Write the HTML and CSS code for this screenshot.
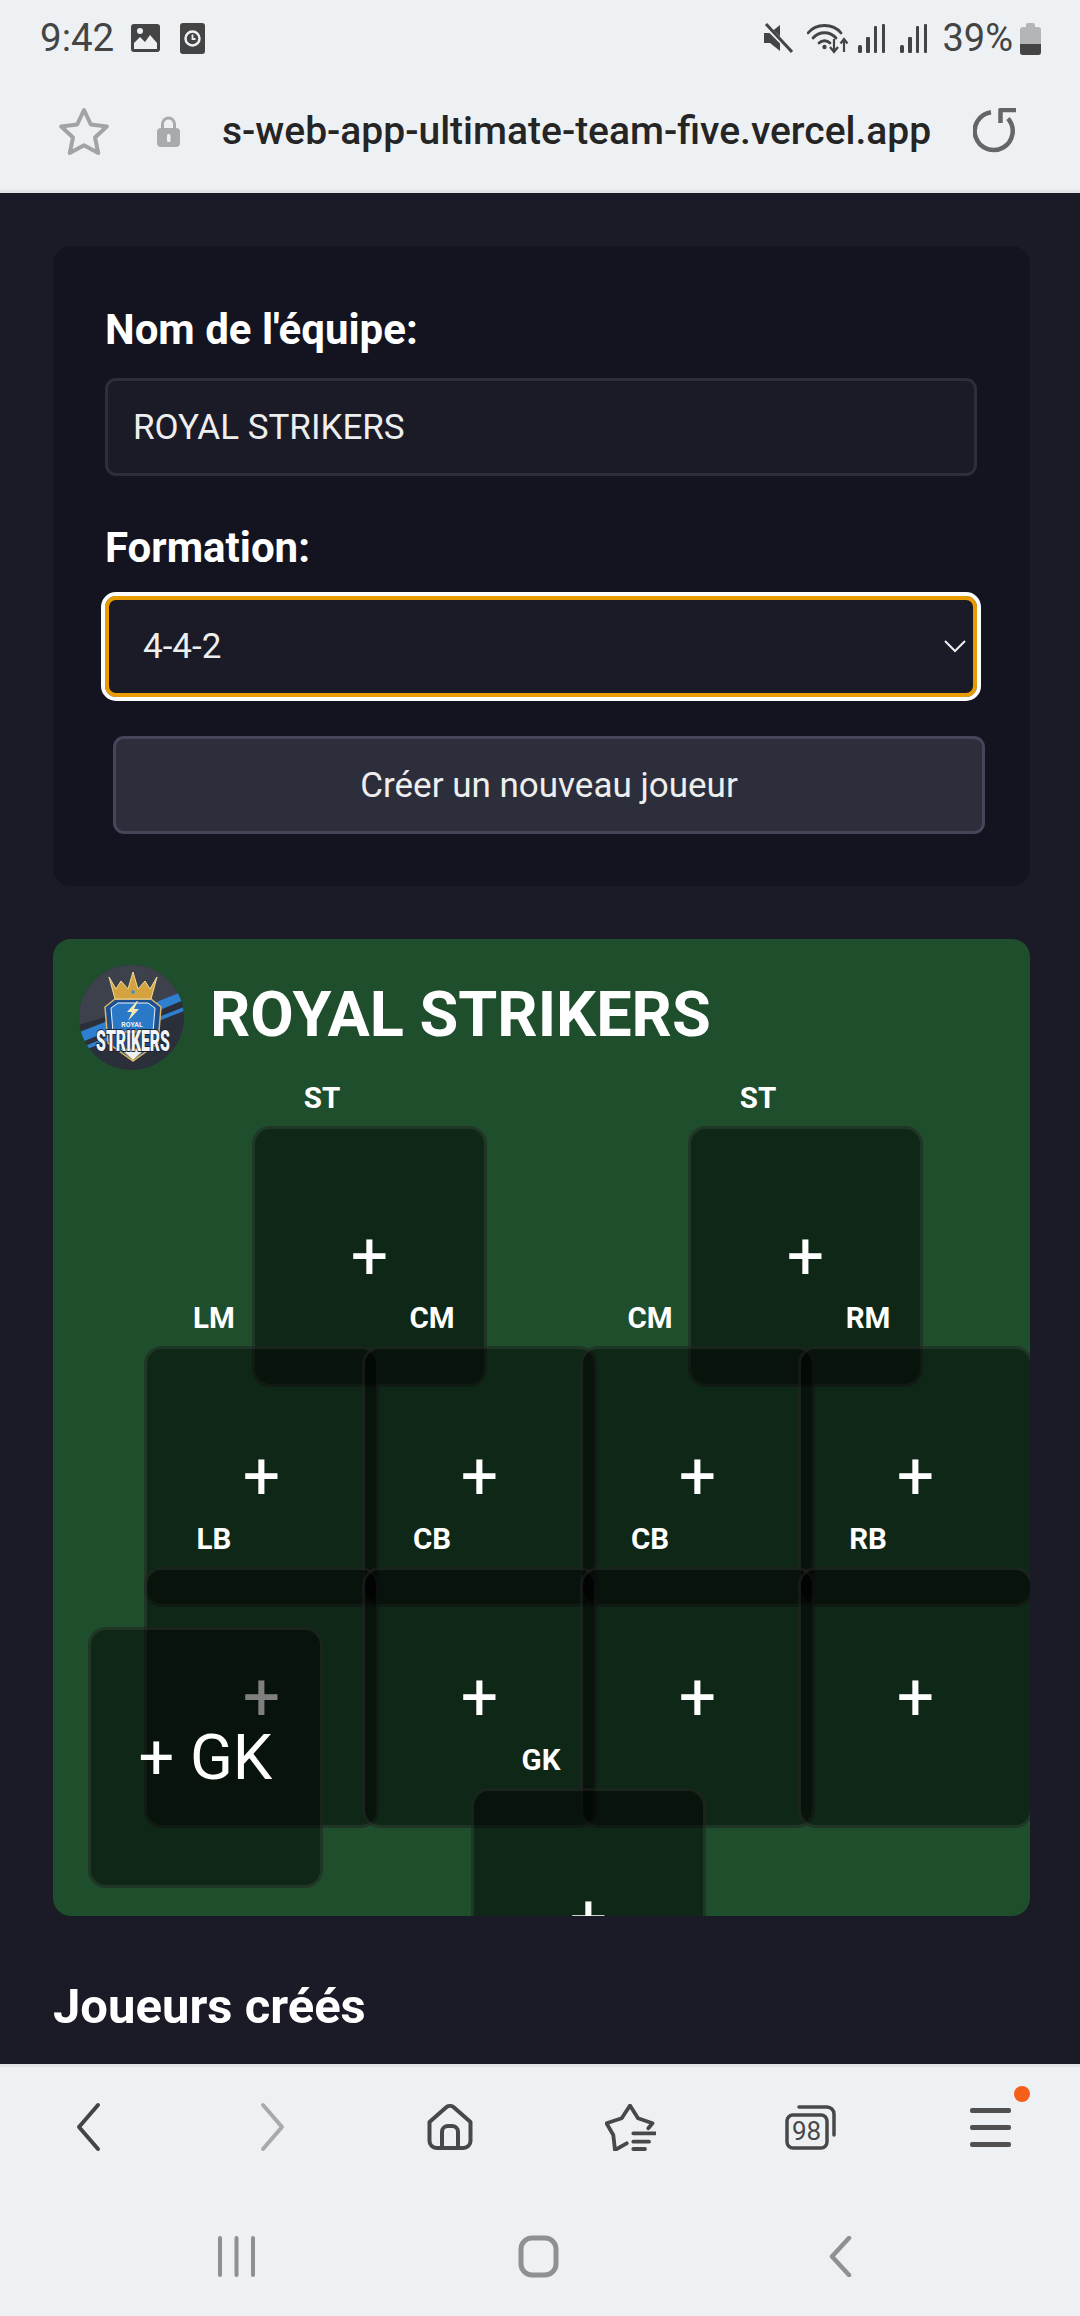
FILE: index.html
```html
<!DOCTYPE html>
<html lang="fr">
<head>
<meta charset="utf-8">
<title>Ultimate Team</title>
<link rel="stylesheet" href="styles.css">
</head>
<body>
<header class="chrome-top">
  <div class="status">
    <div class="status-group">
      <span class="time">9:42</span>
      <svg class="ic-img" viewBox="0 0 29 28"><rect width="29" height="28" rx="3" fill="#444"/><path d="M3 25V19l6-6 5 5 5-7 7 8v6z" fill="#eef1f4"/><circle cx="9" cy="7" r="3" fill="#eef1f4"/></svg>
      <svg class="ic-clock" viewBox="0 0 25 31"><rect width="25" height="31" rx="3" fill="#444"/><circle cx="12.500" cy="15.500" r="7" fill="none" stroke="#eef1f4" stroke-width="2.500"/><path d="M12.500 11.500v4.500h3" fill="none" stroke="#eef1f4" stroke-width="1.800"/></svg>
    </div>
    <div class="status-group right">
      <svg class="ic-mute" viewBox="0 0 29 30"><path d="M0 10h6l10-8v26l-10-8H0z" fill="#444"/><path d="M1 2l27 27" stroke="#eef1f4" stroke-width="5"/><path d="M2 1l26 28" stroke="#444" stroke-width="3"/></svg>
      <svg class="ic-wifi" viewBox="0 0 42 31"><g fill="none" stroke="#444" stroke-width="2.800" stroke-linecap="round"><path d="M1 10C9 0 26 0 34 10"/><path d="M6 15C12 8 23 8 29 15"/><path d="M12 20c3-3 8-3 11 0"/></g><circle cx="17.500" cy="24" r="2.200" fill="#444"/><path d="M27 16v13m-4-5 4 5 4-5M37 29V16m-3.500 4.500 3.500-4.500 3.500 4.500" fill="none" stroke="#444" stroke-width="2.200"/></svg>
      <svg class="ic-signal" viewBox="0 0 28 29"><g fill="#444"><rect x="0" y="21" width="4" height="8" rx="1.500"/><rect x="8" y="13" width="4" height="16" rx="1"/><rect x="16" y="2" width="3" height="27" rx="1"/><rect x="24" y="0" width="3" height="29" rx="1"/></g></svg>
      <svg class="ic-signal" viewBox="0 0 28 29"><g fill="#444"><rect x="0" y="21" width="4" height="8" rx="1.500"/><rect x="8" y="13" width="4" height="16" rx="1"/><rect x="16" y="2" width="3" height="27" rx="1"/><rect x="24" y="0" width="3" height="29" rx="1"/></g></svg>
      <span class="battery-text">39%</span>
      <svg class="ic-battery" viewBox="0 0 21 33"><path d="M6 3a2 2 0 0 1 2-2h5a2 2 0 0 1 2 2v2h3a3 3 0 0 1 3 3v22a3 3 0 0 1-3 3H3a3 3 0 0 1-3-3V8a3 3 0 0 1 3-3h3z" fill="#b4b5b6"/><path d="M0 22h21v8a3 3 0 0 1-3 3H3a3 3 0 0 1-3-3z" fill="#444"/></svg>
    </div>
  </div>
  <div class="urlbar">
    <svg class="ic-star" viewBox="0 0 52 48"><path d="M26 3l6.800 14.500 16 2-11.800 11 3.200 15.500L26 38.200 11.800 46 15 30.500 3.200 19.500l16-2z" fill="none" stroke="#a2a3a4" stroke-width="4" stroke-linejoin="round"/></svg>
    <svg class="ic-lock" viewBox="0 0 23 31"><path d="M5.500 14V8a6 6 0 0 1 12 0v6" fill="none" stroke="#a9aaab" stroke-width="3"/><rect y="12" width="23" height="19" rx="4" fill="#a9aaab"/><rect x="10" y="18" width="3.500" height="8" rx="1.500" fill="#eef1f4"/></svg>
    <span class="url">s-web-app-ultimate-team-five.vercel.app</span>
    <svg class="ic-reload" viewBox="0 0 46 46"><path d="M18 4.200A19 19 0 1 0 35 10.500" fill="none" stroke="#666" stroke-width="4.500"/><path d="M43 2H27.500V15" fill="none" stroke="#666" stroke-width="4.500" stroke-linejoin="round"/></svg>
  </div>
</header>

<main class="page">
  <section class="form-card">
    <label class="field-label" for="team">Nom de l'équipe:</label>
    <input class="text-input" id="team" type="text" value="ROYAL STRIKERS">
    <label class="field-label second" for="formation">Formation:</label>
    <div class="select-wrap">
      <select class="select" id="formation"><option>4-4-2</option></select>
      <svg class="chevron" viewBox="0 0 22 13"><path d="M1 1l10 10L21 1" fill="none" stroke="#eee" stroke-width="2"/></svg>
    </div>
    <button class="create-btn" type="button">Créer un nouveau joueur</button>
  </section>

  <section class="team-card">
    <div class="team-head">
      <svg class="logo" viewBox="0 0 105 105">
        <defs><clipPath id="disc"><circle cx="52.500" cy="52.500" r="52.500"/></clipPath></defs>
        <g clip-path="url(#disc)">
          <rect width="105" height="105" fill="#2b2f3a"/>
          <path d="M0 0h105v28L0 60z" fill="#3d414c"/>
          <path d="M-2 68 105 26v9L-2 79z" fill="#2f7fd0"/>
          <path d="M-2 84 105 42v4L-2 88z" fill="#2f7fd0"/>
          <path d="M26 42l10-8h36l10 8-3 36-25 18-25-18z" fill="#1d4f8f" stroke="#d9b469" stroke-width="1.500"/>
          <path d="M32 43l7-5h30l7 5-2 24H34z" fill="#2a79c8" stroke="#eef2f6" stroke-width="1"/>
          <path d="M30 12 37 24 42 16 49 24 54 7 59 24 66 16 71 24 78 12 72 34H36z" fill="#d4a23f" stroke="#f2dc9c" stroke-width="1"/>
          <circle cx="54" cy="27" r="1.800" fill="#2f8ed8"/>
          <path d="M58 36 48 47h5l-4 9 11-12h-5l4-8z" fill="#f6e7b4"/>
          <text class="logo-small" x="53" y="62" text-anchor="middle">ROYAL</text>
          <path d="M42 84h24L54 95z" fill="#eef1f5" stroke="#d9b469" stroke-width="1"/>
          <text class="logo-big" x="54" y="86" text-anchor="middle" textLength="74" lengthAdjust="spacingAndGlyphs">STRIKERS</text>
        </g>
      </svg>
      <h2 class="team-name">ROYAL STRIKERS</h2>
    </div>

    <div class="slot st1"><span class="pos">ST</span><span class="plus">+</span></div>
    <div class="slot st2"><span class="pos">ST</span><span class="plus">+</span></div>
    <div class="slot mid c1"><span class="pos">LM</span><span class="plus">+</span></div>
    <div class="slot mid c2"><span class="pos">CM</span><span class="plus">+</span></div>
    <div class="slot mid c3"><span class="pos">CM</span><span class="plus">+</span></div>
    <div class="slot mid c4"><span class="pos">RM</span><span class="plus">+</span></div>
    <div class="slot back c1"><span class="pos">LB</span><span class="plus">+</span></div>
    <div class="slot back c2"><span class="pos">CB</span><span class="plus">+</span></div>
    <div class="slot back c3"><span class="pos">CB</span><span class="plus">+</span></div>
    <div class="slot back c4"><span class="pos">RB</span><span class="plus">+</span></div>
    <div class="slot gk"><span class="pos">GK</span><span class="plus">+</span></div>
    <div class="slot bench"><span class="bench-text">+ GK</span></div>
  </section>

  <h2 class="players-title">Joueurs créés</h2>
</main>

<footer class="chrome-bottom">
  <nav class="browser-nav">
    <svg class="ic-chev prev" viewBox="0 0 26 50"><path d="M23 3 4 25l19 22" fill="none" stroke="#444" stroke-width="4" stroke-linecap="round" stroke-linejoin="round"/></svg>
    <svg class="ic-chev next" viewBox="0 0 26 50"><path d="M3 3l19 22L3 47" fill="none" stroke="#a8a9aa" stroke-width="4" stroke-linecap="round" stroke-linejoin="round"/></svg>
    <svg class="ic-home" viewBox="0 0 46 46"><path d="M2.500 18 19 3.500a6 6 0 0 1 8 0L43.500 18v19a7 7 0 0 1-7 7h-27a7 7 0 0 1-7-7z" fill="none" stroke="#484848" stroke-width="4" stroke-linejoin="round"/><path d="M15 44V28a6 6 0 0 1 6-6h4a6 6 0 0 1 6 6v16" fill="none" stroke="#484848" stroke-width="4"/></svg>
    <svg class="ic-starlist" viewBox="0 0 51 47"><path d="M21.700 39.300 10 46 8.300 31 1.500 19.300 16.700 14.300 25 1.500 33 14.300 47.500 19.300 43.300 24.300" fill="none" stroke="#484848" stroke-width="3.800" stroke-linejoin="round" stroke-linecap="round"/><path d="M28.300 29.300H50M28.300 37.700H44M28.300 45H40" stroke="#484848" stroke-width="3.800" stroke-linecap="round"/></svg>
    <span class="tabs">
      <svg class="ic-tabs" viewBox="0 0 51 45"><path d="M14 2h28a7 7 0 0 1 7 7v21" fill="none" stroke="#484848" stroke-width="3.500" stroke-linecap="round"/><rect x="2" y="10" width="40" height="33" rx="6" fill="none" stroke="#484848" stroke-width="3.500"/></svg>
      <span class="tabs-count">98</span>
    </span>
    <span class="menu">
      <span class="menu-line"></span><span class="menu-line"></span><span class="menu-line"></span>
      <span class="menu-dot"></span>
    </span>
  </nav>
  <nav class="system-nav">
    <svg class="ic-recents" viewBox="0 0 37 41"><path d="M2 2v37M18.500 2v37M35 2v37" stroke="#8f9091" stroke-width="4" stroke-linecap="round"/></svg>
    <svg class="ic-square" viewBox="0 0 41 43"><rect x="3" y="3" width="35" height="37" rx="11" fill="none" stroke="#8f9091" stroke-width="5"/></svg>
    <svg class="ic-sysback" viewBox="0 0 24 41"><path d="M21 2 4 20.500 21 39" fill="none" stroke="#8f9091" stroke-width="4.500" stroke-linecap="round" stroke-linejoin="round"/></svg>
  </nav>
</footer>
</body>
</html>
```

FILE: styles.css
```css
* { box-sizing: border-box; }

html, body {
  margin: 0;
  height: 2316px;
  overflow: hidden;
}

body {
  display: flex;
  flex-direction: column;
  background: #1a1b27;
  font-family: Roboto, "Noto Sans", sans-serif;
  color: #fff;
}

/* Browser chrome */
.chrome-top {
  height: 193px;
  flex: none;
  background: #eef1f4;
  border-bottom: 3px solid #e3e5e7;
}

.status {
  height: 66px;
  padding: 20px 39px 0 40px;
  display: flex;
  justify-content: space-between;
  align-items: flex-start;
}

.status-group {
  display: flex;
  align-items: center;
  height: 36px;
}

.time {
  font-size: 38.500px;
  line-height: 36px;
  color: #444;
  width: 91px;
}

.ic-img { width: 29px; height: 28px; margin-right: 20px; }
.ic-clock { width: 25px; height: 31px; }
.ic-mute { width: 29px; height: 30px; margin-right: 14px; }
.ic-wifi { width: 42px; height: 31px; margin-right: 9px; }
.ic-signal { width: 28px; height: 29px; margin-right: 14px; }

.battery-text {
  font-size: 38px;
  line-height: 36px;
  color: #444;
  margin-right: 7px;
}

.ic-battery { width: 21px; height: 33px; }

.urlbar {
  display: flex;
  align-items: center;
  height: 124px;
  padding-left: 58px;
  padding-top: 6px;
}

.ic-star { width: 52px; height: 48px; margin-right: 47px; }
.ic-lock { width: 23px; height: 31px; margin-right: 42px; }

.url {
  width: 708px;
  margin-right: 43px;
  font-size: 39px;
  font-weight: 500;
  color: #252525;
  white-space: nowrap;
}

.ic-reload { width: 46px; height: 46px; }

/* Page */
.page {
  flex: 1;
  min-height: 0;
  overflow: hidden;
  padding: 53px 50px 0 53px;
}

.form-card {
  height: 640px;
  padding: 51px 52px 0;
  background: #13141f;
  border-radius: 18px;
}

.field-label {
  display: block;
  font-size: 42px;
  font-weight: 700;
  line-height: 66px;
  margin-bottom: 15px;
}

.field-label.second { margin-top: 39px; }

.text-input {
  display: block;
  width: 872px;
  height: 98px;
  padding: 0 25px;
  background: #1a1b27;
  border: 3px solid #2d2e3a;
  border-radius: 11px;
  color: #eee;
  font-family: inherit;
  font-size: 35px;
}

.select-wrap {
  position: relative;
  width: 872px;
}

.select {
  display: block;
  width: 872px;
  height: 101px;
  padding: 0 34px;
  appearance: none;
  background: #1a1b27;
  border: 4px solid #e89c00;
  border-radius: 11px;
  outline: 4px solid #fff;
  color: #eee;
  font-family: inherit;
  font-size: 35px;
}

.chevron {
  position: absolute;
  right: 11px;
  top: 44px;
  width: 22px;
  height: 13px;
}

.create-btn {
  display: block;
  width: 872px;
  height: 98px;
  margin: 39px 0 0 8px;
  background: #2d2e3c;
  border: 3px solid #45465a;
  border-radius: 11px;
  color: #eee;
  font-family: inherit;
  font-size: 35px;
}

/* Team pitch */
.team-card {
  position: relative;
  height: 977px;
  margin-top: 53px;
  background: #1f4e2d;
  border-radius: 18px;
  overflow: hidden;
}

.team-head {
  display: flex;
  align-items: center;
  gap: 26px;
  padding: 26px 0 0 26px;
}

.logo { width: 105px; height: 105px; flex: none; }

.logo-small {
  font-family: Roboto, sans-serif;
  font-size: 7px;
  font-weight: 700;
  fill: #e8edf2;
}

.logo-big {
  font-family: Roboto, sans-serif;
  font-size: 30px;
  font-weight: 900;
  fill: #f2f4f7;
  stroke: #1b2230;
  stroke-width: 2px;
  paint-order: stroke;
}

.team-name {
  margin: 0 0 6px;
  font-size: 63px;
  font-weight: 700;
  line-height: 1;
  white-space: nowrap;
}

.slot {
  position: absolute;
  width: 235px;
  height: 261px;
  display: flex;
  align-items: center;
  justify-content: center;
  background: rgba(0, 0, 0, 0.5);
  border: 3px solid rgba(255, 255, 255, 0.07);
  border-radius: 18px;
}

.pos {
  position: absolute;
  left: -3px;
  top: -56px;
  width: 140px;
  text-align: center;
  font-size: 29.500px;
  font-weight: 700;
  line-height: 50px;
}

.plus {
  font-size: 66px;
  font-weight: 400;
  line-height: 1;
}

.bench-text {
  font-size: 63px;
  line-height: 1;
  white-space: nowrap;
}

.st1 { left: 199px; top: 187px; }
.st2 { left: 635px; top: 187px; }
.mid { top: 407px; }
.back { top: 628px; }
.c1 { left: 91px; }
.c2 { left: 309px; }
.c3 { left: 527px; }
.c4 { left: 745px; }
.gk { left: 418px; top: 849px; }
.bench { left: 35px; top: 688px; }

.players-title {
  margin: 63px 0 0;
  font-size: 49px;
  font-weight: 700;
  line-height: 56px;
}

/* Bottom chrome */
.chrome-bottom {
  height: 252px;
  flex: none;
  background: #eef1f4;
  border-top: 3px solid #e3e5e7;
}

.browser-nav {
  display: grid;
  grid-template-columns: repeat(6, 180px);
  justify-items: center;
  align-items: center;
  height: 120px;
}

.ic-chev { width: 26px; height: 50px; }
.ic-chev.prev { margin-right: 4px; }
.ic-chev.next { margin-left: 6px; }
.ic-home { width: 46px; height: 46px; }
.ic-starlist { width: 51px; height: 47px; }

.tabs {
  position: relative;
  display: block;
  width: 51px;
  height: 45px;
}

.ic-tabs { display: block; width: 51px; height: 45px; }

.tabs-count {
  position: absolute;
  left: 4px;
  top: 11px;
  width: 36px;
  text-align: center;
  font-size: 26px;
  line-height: 31px;
  color: #484848;
}

.menu {
  position: relative;
  display: flex;
  flex-direction: column;
  gap: 12px;
  width: 41px;
}

.menu-line {
  height: 5px;
  background: #505050;
  border-radius: 2px;
}

.menu-dot {
  position: absolute;
  right: -19px;
  top: -22px;
  width: 16px;
  height: 16px;
  border-radius: 50%;
  background: #f4601a;
}

.system-nav {
  display: grid;
  grid-template-columns: repeat(3, 302px);
  justify-items: center;
  align-items: center;
  margin: 48px 0 0 85px;
}

.ic-recents { width: 37px; height: 41px; }
.ic-square { width: 41px; height: 43px; }
.ic-sysback { width: 24px; height: 41px; }
```
